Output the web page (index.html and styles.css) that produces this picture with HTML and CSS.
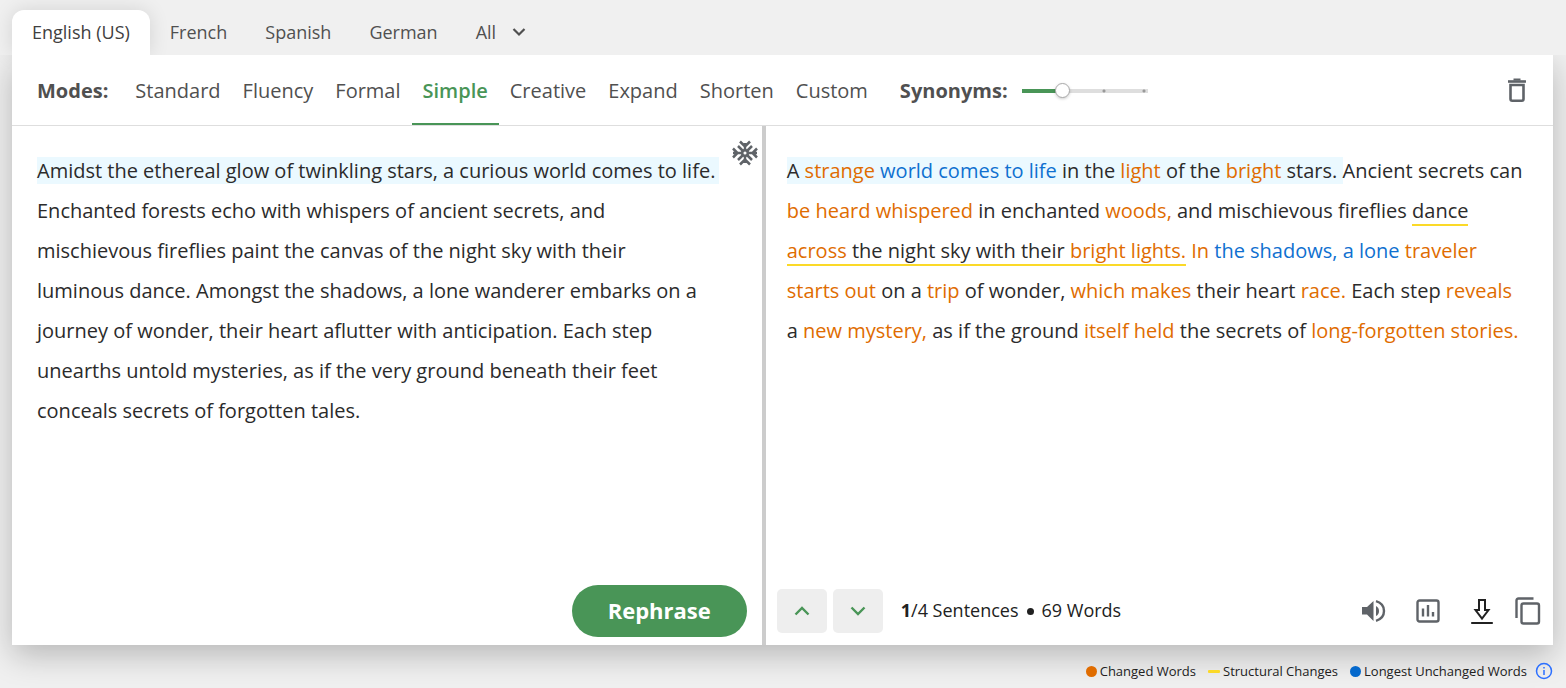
FILE: index.html
```html
<!DOCTYPE html>
<html lang="en">
<head>
<meta charset="utf-8">
<meta name="viewport" content="width=device-width, initial-scale=1">
<title>Paraphraser</title>
<link rel="stylesheet" href="styles.css">
</head>
<body>
<nav class="languages" aria-label="Language">
  <button type="button" class="language language-active">English (US)</button>
  <button type="button" class="language">French</button>
  <button type="button" class="language">Spanish</button>
  <button type="button" class="language">German</button>
  <button type="button" class="language language-all">All
    <svg width="14" height="10" viewBox="0 0 14 10" fill="none" stroke="currentColor" stroke-width="2.200" aria-hidden="true"><path d="M1.500 2L7 7.500 12.500 2"/></svg>
  </button>
</nav>

<main class="panel">
  <div class="toolbar">
    <span class="toolbar-label">Modes:</span>
    <div class="modes">
      <button type="button" class="mode">Standard</button>
      <button type="button" class="mode">Fluency</button>
      <button type="button" class="mode">Formal</button>
      <button type="button" class="mode mode-active">Simple</button>
      <button type="button" class="mode">Creative</button>
      <button type="button" class="mode">Expand</button>
      <button type="button" class="mode">Shorten</button>
      <button type="button" class="mode">Custom</button>
    </div>
    <label class="toolbar-label" for="synonyms">Synonyms:</label>
    <input class="slider" id="synonyms" type="range" min="0" max="3" step="1" value="1">
    <button type="button" class="icon-button trash" aria-label="Delete text">
      <svg width="20" height="24" viewBox="0 0 20 24" fill="none" stroke="currentColor" aria-hidden="true"><path d="M1 3.500h18" stroke-width="2.600"/><path d="M6.500 1.500h7" stroke-width="2"/><path d="M3.500 7v14q0 1.700 1.700 1.700h9.600q1.700 0 1.700-1.700V7z" stroke-width="2.600"/></svg>
    </button>
  </div>

  <div class="panes">
    <section class="pane source" aria-label="Original text">
      <p class="text"><span class="current">Amidst the ethereal glow of twinkling stars, a curious world comes to life.</span> Enchanted forests echo with whispers of ancient secrets, and mischievous fireflies paint the canvas of the night sky with their luminous dance. Amongst the shadows, a lone wanderer embarks on a journey of wonder, their heart aflutter with anticipation. Each step unearths untold mysteries, as if the very ground beneath their feet conceals secrets of forgotten tales.</p>
      <button type="button" class="icon-button freeze" aria-label="Freeze words">
        <svg width="26" height="26" viewBox="0 0 26 26" fill="none" stroke="currentColor" stroke-width="2.500" aria-hidden="true"><circle cx="13" cy="13" r="2.800"/><path d="M13 3v7M13 16v7M1 13h9M16 13h9M6 6l5 5M15 15l5 5M20 6l-5 5M11 15l-5 5M8 1.500l5 5 5-5M8 24.500l5-5 5 5M1 8.500L5.500 13 1 17.500M25 8.500L20.500 13l4.500 4.500"/></svg>
      </button>
      <div class="source-actions">
        <button type="button" class="rephrase">Rephrase</button>
      </div>
    </section>
    <div class="divider"></div>
    <section class="pane result" aria-label="Rephrased text">
      <p class="text"><span class="current">A <span class="changed">strange</span> <span class="unchanged">world comes to life</span> in the <span class="changed">light</span> of the <span class="changed">bright</span> stars. </span>Ancient secrets can <span class="changed">be heard whispered</span> in enchanted <span class="changed">woods,</span> and mischievous fireflies <span class="structural">dance <span class="changed">across</span> the night sky with their <span class="changed">bright lights.</span></span> <span class="changed">In</span> <span class="unchanged">the shadows, a lone</span> <span class="changed">traveler starts out</span> on a <span class="changed">trip</span> of wonder, <span class="changed">which makes</span> their heart <span class="changed">race.</span> Each step <span class="changed">reveals</span> a <span class="changed">new mystery,</span> as if the ground <span class="changed">itself held</span> the secrets of <span class="changed">long-forgotten stories.</span></p>
      <div class="result-bar">
        <button type="button" class="step" aria-label="Previous sentence"><svg width="16" height="10" viewBox="0 0 16 10" fill="none" stroke="currentColor" stroke-width="2.400" aria-hidden="true"><path d="M1.500 8.500L8 2l6.500 6.500"/></svg></button>
        <button type="button" class="step" aria-label="Next sentence"><svg width="16" height="10" viewBox="0 0 16 10" fill="none" stroke="currentColor" stroke-width="2.400" aria-hidden="true"><path d="M1.500 1.500L8 8l6.500-6.500"/></svg></button>
        <div class="counts"><span><b>1</b>/4 Sentences</span><span class="bullet"></span><span>69 Words</span></div>
        <div class="tools">
          <button type="button" class="icon-button" aria-label="Listen"><svg width="24" height="24" viewBox="0 0 24 24" aria-hidden="true"><path fill="currentColor" d="M0 8v7.500h5l6.500 6.500V2L5 8zM14 7v10q3-1.500 3-5t-3-5z"/><path d="M14 2.200c5 1.500 8 5 8 9.800s-3 8.300-8 9.800" fill="none" stroke="currentColor" stroke-width="2.400"/></svg></button>
          <button type="button" class="icon-button" aria-label="Statistics"><svg width="24" height="24" viewBox="0 0 24 24" fill="none" stroke="currentColor" stroke-width="2.400" aria-hidden="true"><rect x="1.500" y="1.500" width="21" height="21" rx="2"/><path d="M7 9.500v8M12 6v11.500M17 13v4.500"/></svg></button>
          <button type="button" class="icon-button export" aria-label="Export"><svg width="24" height="26" viewBox="0 0 24 26" fill="none" stroke="currentColor" stroke-width="2" aria-hidden="true"><path d="M9 2h6v10h3.500L12 20.500 5.500 12H9zM1.200 25h21.600"/></svg></button>
          <button type="button" class="icon-button" aria-label="Copy"><svg width="26" height="28" viewBox="0 0 26 28" fill="none" stroke="currentColor" stroke-width="2.400" aria-hidden="true"><path d="M18.500 1.500H3.500q-2 0-2 2V21"/><rect x="6.500" y="6.500" width="17.500" height="20" rx="2"/></svg></button>
        </div>
      </div>
    </section>
  </div>
</main>

<footer class="legend">
  <span class="legend-item"><i class="dot dot-changed"></i>Changed Words</span>
  <span class="legend-item"><i class="dash"></i>Structural Changes</span>
  <span class="legend-item"><i class="dot dot-unchanged"></i>Longest Unchanged Words</span>
  <button type="button" class="icon-button info" aria-label="About the colors"><svg width="18" height="18" viewBox="0 0 18 18" fill="none" stroke="currentColor" stroke-width="1.500" aria-hidden="true"><circle cx="9" cy="9" r="7.500"/><path d="M9 8v5M9 5v1.500"/></svg></button>
</footer>
</body>
</html>
```
FILE: styles.css
```css
* {
  box-sizing: border-box;
}

body {
  margin: 0;
  padding: 10px 13px 0 12px;
  min-height: 100vh;
  display: flex;
  flex-direction: column;
  background: #f0f0f0;
  color: #212121;
  font-family: "Open Sans", "Noto Sans", sans-serif;
}

button {
  margin: 0;
  padding: 0;
  border: 0;
  background: none;
  color: inherit;
  font: inherit;
  cursor: pointer;
}

svg {
  display: block;
}

.languages {
  display: flex;
  height: 45px;
}

.language {
  padding: 0 19px 2px;
  font-size: 18px;
  color: #505050;
}

.language-active {
  padding: 0 20px 2px;
  margin-right: 1px;
  border-radius: 12px 12px 0 0;
  background: #fff;
  box-shadow: 0 0 20px rgba(0, 0, 0, 0.12);
  color: #404040;
  font-weight: 500;
}

.language-all {
  display: flex;
  align-items: center;
  gap: 16px;
}

.panel {
  position: relative;
  flex: 1;
  display: flex;
  flex-direction: column;
  background: #fff;
  box-shadow: 0 10px 30px rgba(0, 0, 0, 0.24);
  clip-path: inset(0 -13px -43px -12px);
}

.toolbar {
  display: flex;
  align-items: center;
  height: 71px;
  padding: 0 24px 0 25px;
  border-bottom: 1px solid #dedede;
  font-size: 20px;
  color: #505050;
}

.toolbar-label {
  font-weight: 700;
}

.modes {
  display: flex;
  align-self: stretch;
  margin: 0 21px 0 16px;
}

.mode {
  padding: 2px 11px 0;
  border-bottom: 2px solid transparent;
}

.mode-active {
  border-color: #499557;
  color: #499557;
  font-weight: 600;
}

.slider {
  appearance: none;
  width: 137px;
  height: 16px;
  margin: 1px 0 0 7px;
  background:
    radial-gradient(circle at 89px 8px, #999 1px, transparent 2px),
    radial-gradient(circle at 129px 8px, #999 1px, transparent 2px),
    linear-gradient(to right, #499557 41px, #dedede 41px) 7px center / 126px 4px no-repeat;
}

.slider::-webkit-slider-thumb {
  appearance: none;
  width: 15px;
  height: 15px;
  margin: 0;
  border: 1px solid #aaa;
  border-radius: 50%;
  background: #fff;
  box-shadow: 0 1px 3px rgba(0, 0, 0, 0.2);
}

.icon-button {
  color: #5f6368;
}

.trash {
  margin-left: auto;
  padding: 0 2px;
}

.panes {
  flex: 1;
  display: grid;
  grid-template-columns: 20fr 4px 21fr;
}

.pane {
  position: relative;
  display: flex;
  flex-direction: column;
  justify-content: space-between;
}

.text {
  margin: 0;
  color: #2b2b2b;
  font-size: 20px;
  line-height: 40px;
}

.source .text {
  padding: 25px 46px 0 25px;
}

.result .text {
  padding: 25px 28px 0 21px;
}

.current {
  background: #ebf9ff;
}

.source .current {
  box-shadow: 4px 0 0 #ebf9ff;
}

.changed {
  color: #e06c00;
}

.unchanged {
  color: #0f70d0;
}

.structural {
  border-bottom: 2px solid #fbd928;
}

.divider {
  background: #ccc;
}

.freeze {
  position: absolute;
  top: 14px;
  right: 4px;
}

.source-actions {
  display: flex;
  justify-content: flex-end;
  padding: 0 15px 8px;
}

.rephrase {
  height: 52px;
  padding: 0 36px 2px;
  border-radius: 26px;
  background: #499557;
  color: #fff;
  font-size: 22px;
  font-weight: 700;
}

.result-bar {
  display: flex;
  align-items: center;
  gap: 6px;
  padding: 0 12px 12px 11px;
}

.step {
  display: grid;
  place-items: center;
  width: 50px;
  height: 44px;
  border-radius: 5px;
  background: #eee;
  color: #499557;
}

.counts {
  display: flex;
  align-items: center;
  gap: 8px;
  margin-left: 12px;
  padding-bottom: 2px;
  font-size: 18px;
  font-weight: 500;
}

.bullet {
  width: 7px;
  height: 7px;
  margin-top: 3px;
  border-radius: 50%;
  background: #212121;
}

.tools {
  display: flex;
  align-items: center;
  gap: 30px;
  margin-left: auto;
}

.export {
  color: #212121;
}

.export + .icon-button {
  margin-left: -9px;
}

.legend {
  display: flex;
  align-items: center;
  justify-content: flex-end;
  gap: 12px;
  height: 43px;
  padding-top: 9px;
  font-size: 13px;
  z-index: 1;
}

.legend-item {
  display: flex;
  align-items: center;
  gap: 3px;
}

.dot {
  width: 11px;
  height: 11px;
  border-radius: 50%;
}

.dot-changed {
  background: #e06c00;
}

.dot-unchanged {
  background: #0468cc;
}

.dash {
  width: 12px;
  height: 3px;
  border-radius: 1px;
  background: #fbd928;
}

.info {
  margin-left: -4px;
  color: #2b6fff;
}
```
